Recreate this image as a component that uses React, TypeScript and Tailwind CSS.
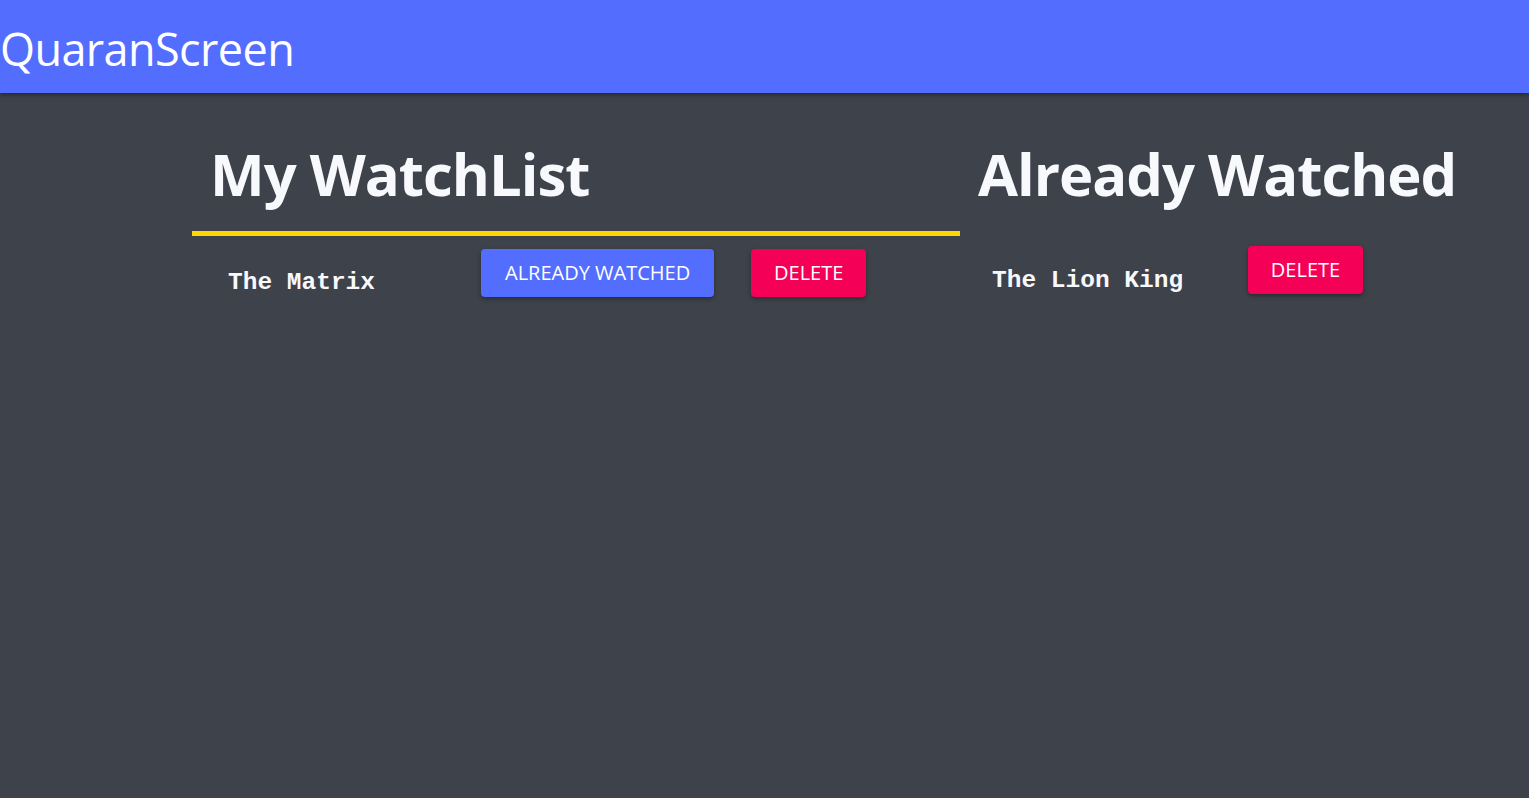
import React from "react";

const sans = "font-['Open_Sans','Noto_Sans',sans-serif]";
const mono = "font-['Liberation_Mono','DejaVu_Sans_Mono',monospace]";

const Button = ({ label, color }: { label: string; color: "blue" | "red" }) => (
  <button
    className={`${sans} h-12 rounded text-[20px] uppercase text-white shadow-[0_2px_4px_rgba(0,0,0,0.35)] ${
      color === "blue" ? "bg-[#536dfe] px-6" : "bg-[#f50057] w-[115px]"
    }`}
  >
    {label}
  </button>
);

const App = () => {
  const watchlist = ["The Matrix"];
  const watched = ["The Lion King"];

  return (
    <div className="min-h-[798px] bg-[#3e424b]">
      <header className="flex h-[93px] items-center bg-[#536dfe] pt-[4px] shadow-[0_2px_4px_rgba(0,0,0,0.4)]">
        <h1 className={`${sans} text-[45px] tracking-[-0.6px] text-white`}>QuaranScreen</h1>
      </header>
      <main className="ml-[192px] flex">
        <section className="w-[768px]">
          <h2 className={`${sans} pl-[18px] pt-[41px] text-[58px] font-bold leading-[80px] tracking-[-1px] text-[#f8f9fd]`}>
            My WatchList
          </h2>
          <div className="mt-[17px] h-[5px] bg-[#ffd600]" />
          <ul>
            {watchlist.map((m) => (
              <li key={m} className="mt-[13px] flex items-start pl-[36px]">
                <p className={`${mono} mt-[20px] w-[253px] text-[24.5px] font-bold leading-[28px] text-[#f8f9fd]`}>{m}</p>
                <Button label="Already Watched" color="blue" />
                <div className="w-[37px]" />
                <Button label="Delete" color="red" />
              </li>
            ))}
          </ul>
        </section>
        <section className="flex-1">
          <h2 className={`${sans} pl-[18px] pt-[41px] text-[58px] font-bold leading-[80px] tracking-[-1px] text-[#f8f9fd]`}>
            Already Watched
          </h2>
          <ul>
            {watched.map((m) => (
              <li key={m} className="mt-[32px] flex items-start pl-[32px]">
                <p className={`${mono} mt-[21px] w-[256px] text-[24.5px] font-bold leading-[28px] text-[#f8f9fd]`}>{m}</p>
                <Button label="Delete" color="red" />
              </li>
            ))}
          </ul>
        </section>
      </main>
    </div>
  );
};

export default App;
